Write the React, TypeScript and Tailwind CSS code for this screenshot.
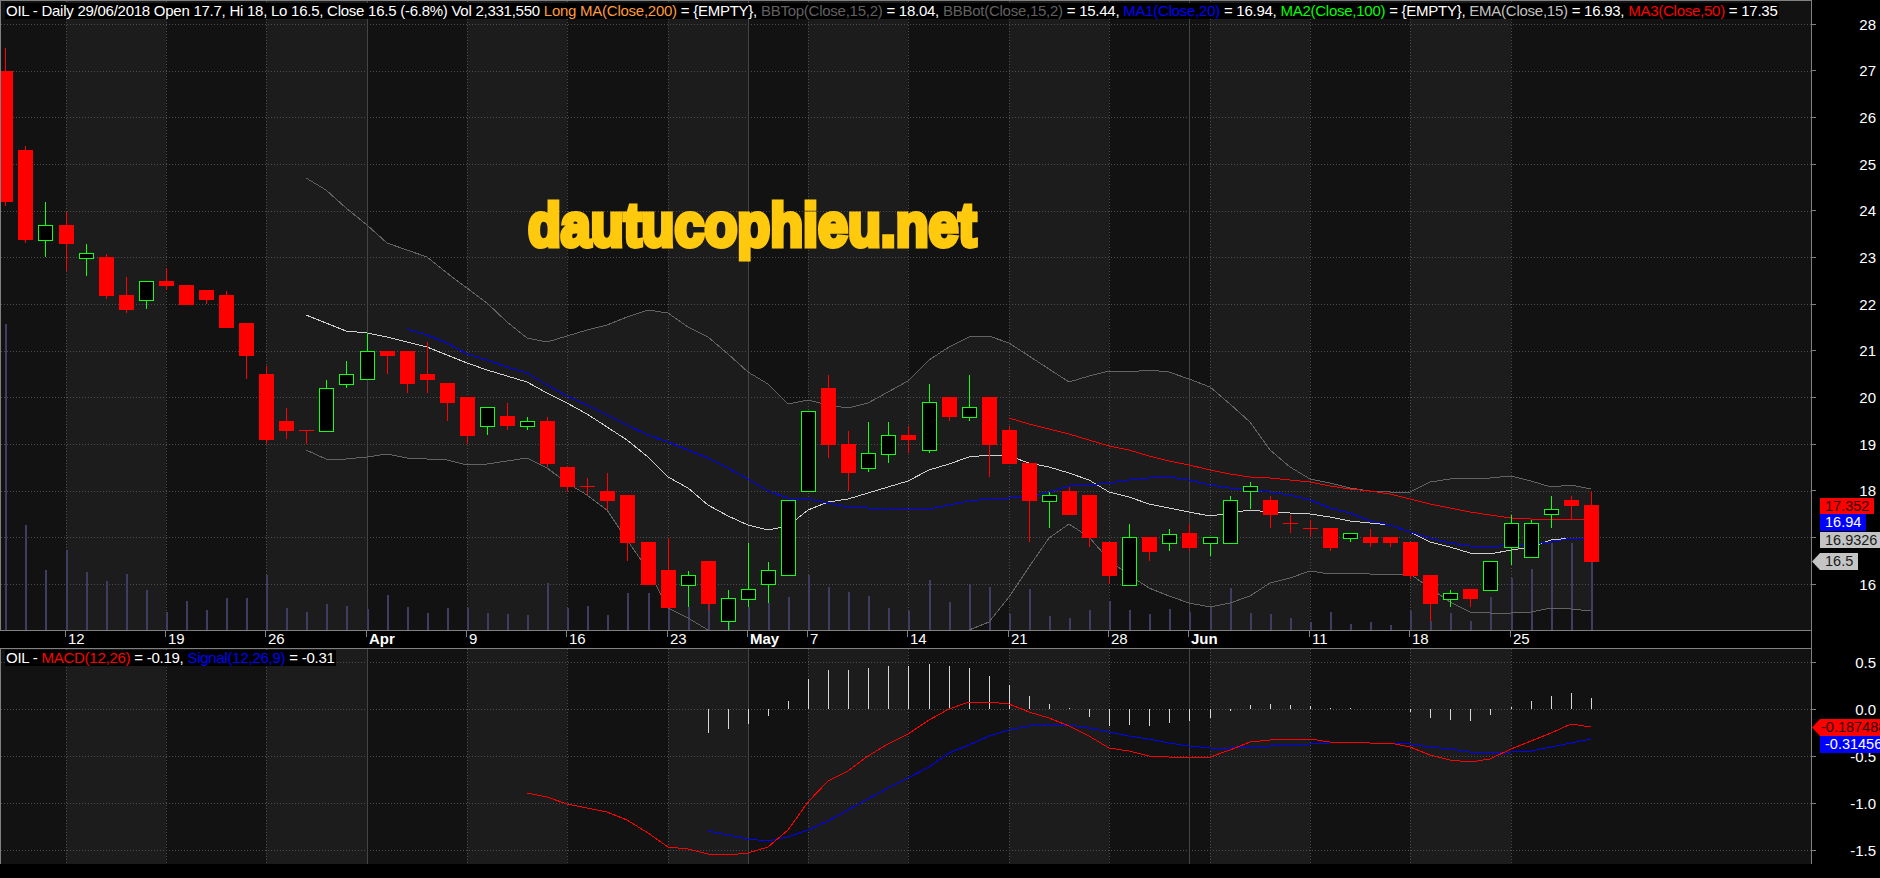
// OIL daily chart (price pane + MACD pane)
const barX = (i: number) => Math.round(5.3 + 20.07 * i);

// wick top, body top, body bottom, wick bottom, up
const candles = [
  [48,71,202,206,0],[146,150,240,243,0],[202,225,240,257,1],[212,225,244,271,0],[244,253,258,276,1],
  [254,257,296,299,0],[277,295,310,313,0],[281,281,300,309,1],[268,281,286,290,0],[285,285,305,305,0],
  [290,290,300,304,0],[291,295,328,328,0],[323,323,356,379,0],[366,374,440,444,0],[408,421,431,439,0],
  [430,430,430,444,0],[380,388,431,431,1],[361,374,384,388,1],[333,351,379,379,1],[351,351,356,374,0],
  [351,351,384,393,0],[342,374,380,393,0],[383,383,403,421,0],[397,397,436,444,0],[407,407,426,435,1],
  [403,416,426,430,0],[417,421,426,430,1],[417,421,464,467,0],[467,467,487,492,0],[478,486,486,495,0],
  [473,491,501,510,0],[495,495,543,561,0],[542,542,585,585,0],[538,570,608,608,0],[571,575,585,607,1],
  [561,561,604,610,0],[590,598,621,630,1],[543,589,599,607,1],[562,570,584,603,1],[500,500,575,575,1],
  [411,411,491,491,1],[375,388,445,458,0],[431,444,473,491,0],[422,453,468,472,1],[422,435,454,463,1],
  [426,435,440,453,0],[384,402,450,453,1],[397,397,417,421,0],[375,407,417,421,1],[397,397,445,477,0],
  [426,430,464,464,0],[463,463,501,542,0],[492,495,501,528,1],[487,491,515,515,0],[495,495,538,547,0],
  [542,542,576,584,0],[524,537,585,585,1],[537,537,552,561,0],[529,534,543,551,1],[524,533,548,551,0],
  [537,537,543,556,1],[496,500,543,543,1],[482,486,491,509,1],[496,500,515,528,0],[515,523,523,533,0],
  [520,528,528,537,0],[528,528,548,551,0],[533,533,538,542,1],[529,537,543,547,0],[537,537,543,547,0],
  [542,542,576,579,0],[575,575,604,621,0],[590,593,599,607,1],[589,589,599,607,0],[561,561,590,590,1],
  [515,523,547,565,1],[520,523,557,557,1],[496,509,514,528,1],[496,500,506,520,0],[491,505,562,562,0],
];

const volumes = [
  324,525,570,550,572,581,574,590,612,601,610,598,598,575,608,612,604,606,609,595,
  607,613,608,608,613,614,615,583,608,606,615,593,593,608,607,604,621,607,603,597,
  575,587,592,596,608,611,580,602,584,587,614,589,616,618,610,601,610,614,609,612,
  607,588,613,614,618,622,612,624,622,625,611,621,613,621,597,578,569,543,543,562,
];

const bbTop = [
  178,190,208,225,243,250,257,273,288,303,322,338,342,336,330,325,317,310,313,327,
  337,354,372,384,404,400,405,408,403,392,381,360,347,337,336,343,356,369,382,376,
  371,372,370,372,379,387,404,422,450,467,479,483,488,491,492,492,482,479,478,478,
  476,481,487,485,489,
];
const bbBot = [
  450,459,459,457,454,458,459,460,465,464,461,458,468,483,495,510,540,570,608,618,
  630,645,650,650,650,650,650,650,650,650,650,650,650,630,622,597,567,538,524,537,
  560,575,588,596,603,607,603,596,583,578,571,574,573,574,574,574,588,602,612,613,
  613,612,608,609,611,
];
const ema = [
  315,323,331,333,337,342,347,355,363,370,376,382,393,403,414,427,440,457,477,488,
  505,516,525,530,526,510,502,499,493,487,481,470,464,457,455,456,463,467,473,480,
  492,497,504,508,512,516,513,510,512,513,514,517,521,523,525,532,542,547,553,554,
  550,547,540,538,539,
];
const ma20 = [
  329,335,343,354,360,367,373,385,396,405,415,425,435,442,450,458,468,479,491,498,
  499,503,507,508,509,509,509,505,501,499,498,497,492,486,485,483,480,478,477,480,
  485,488,489,492,495,500,508,513,521,525,532,538,543,546,547,545,544,542,538,539,
];
const ma50 = [
  418,424,429,434,440,446,450,456,461,465,470,474,477,478,480,482,486,489,491,494,
  499,504,508,512,515,518,519,519,519,520,
];
const macd = [
  793,797,804,808,812,820,833,847,849,854,855,853,847,830,802,781,771,756,744,734,
  720,709,702,702,704,712,718,726,736,748,751,756,757,758,757,750,742,740,739,739,
  742,742,743,743,747,755,760,762,759,749,741,733,724,727,
];
const signal = [
  831,835,839,841,837,830,821,810,799,788,778,767,753,745,736,730,726,725,725,728,
  732,736,739,743,746,748,748,747,746,744,744,743,742,743,743,744,747,749,752,753,
  752,751,747,743,739,
];
const macdHist = [
  733,729,724,716,701,679,670,670,668,666,666,664,666,668,676,685,696,704,708,717,
  726,725,726,723,721,718,711,705,704,705,706,708,708,709,709,712,718,720,721,715,
  707,701,696,693,698,
];

const lightBands = [[3,8],[13,18],[23,28],[33,37],[40,45],[50,55],[60,65],[70,75]];
const dottedX = [3,8,13,23,28,33,40,45,50,55,60,65,70,75];
const solidX = [18,37,59];
const priceY = [24,71,117,164,211,257,304,351,397,444,491,537,584];
const macdY = [662,709,756,803,850];

const timeTicks: [number, string, boolean][] = [
  [3,"12",false],[8,"19",false],[13,"26",false],[18,"Apr",true],[23,"9",false],[28,"16",false],
  [33,"23",false],[37,"May",true],[40,"7",false],[45,"14",false],[50,"21",false],[55,"28",false],
  [59,"Jun",true],[65,"11",false],[70,"18",false],[75,"25",false],
];

const toPoints = (ys: number[], start: number) =>
  ys.map((y, k) => `${barX(start + k)},${y}`).join(" ");

function Backdrop({ top, height }: { top: number; height: number }) {
  return (
    <>
      {lightBands.map(([a, b]) => (
        <rect key={a} x={barX(a)} y={top} width={barX(b) - barX(a)} height={height} fill="#1c1c1c" />
      ))}
    </>
  );
}

function Grid({ ys, top, height }: { ys: number[]; top: number; height: number }) {
  return (
    <g shapeRendering="crispEdges">
      {ys.map((y) => (
        <line key={y} x1={1} x2={1811} y1={y + 0.5} y2={y + 0.5} stroke="#4d4d4d" strokeDasharray="1 2" />
      ))}
      {dottedX.map((i) => (
        <line key={i} x1={barX(i) + 0.5} x2={barX(i) + 0.5} y1={top} y2={top + height} stroke="#4d4d4d" strokeDasharray="1 2" />
      ))}
      {solidX.map((i) => (
        <line key={i} x1={barX(i) + 0.5} x2={barX(i) + 0.5} y1={top} y2={top + height} stroke="#444444" />
      ))}
    </g>
  );
}

function Curve({ ys, start, color }: { ys: number[]; start: number; color: string }) {
  return <polyline points={toPoints(ys, start)} fill="none" stroke={color} strokeWidth={1} shapeRendering="crispEdges" />;
}

function PriceChart() {
  return (
    <svg width={1810} height={629} viewBox="1 1 1810 629" className="block">
      <rect x={1} y={1} width={1810} height={629} fill="#121212" />
      <Backdrop top={1} height={629} />
      <polygon
        points={`${toPoints(bbTop, 15)} ${[...bbBot].map((y, k) => `${barX(15 + k)},${y}`).reverse().join(" ")}`}
        fill="#1c1c1c"
      />
      <Grid ys={priceY} top={1} height={629} />
      <g shapeRendering="crispEdges">
        {volumes.map((top, i) => (
          <rect key={i} x={barX(i)} y={top} width={2} height={630 - top} fill="#3e3e64" />
        ))}
      </g>
      <Curve ys={bbTop} start={15} color="#636363" />
      <Curve ys={bbBot} start={15} color="#636363" />
      <Curve ys={ema} start={15} color="#cfcfcf" />
      <Curve ys={ma20} start={20} color="#0000ff" />
      <Curve ys={ma50} start={50} color="#ff0000" />
      <g shapeRendering="crispEdges">
        {candles.map(([wt, bt, bb, wb, up], i) => {
          const x = barX(i);
          const color = up ? "#14ff14" : "#ff0000";
          return (
            <g key={i}>
              <line x1={x + 0.5} x2={x + 0.5} y1={wt} y2={wb} stroke={color} />
              {up ? (
                <rect x={x - 7 + 0.5} y={bt + 0.5} width={14} height={bb - bt} fill="#000000" stroke={color} />
              ) : (
                <rect x={x - 7} y={bt} width={15} height={Math.max(bb - bt, 1)} fill={color} />
              )}
            </g>
          );
        })}
      </g>
    </svg>
  );
}

function MacdChart() {
  return (
    <svg width={1810} height={215} viewBox="1 649 1810 215" className="block">
      <rect x={1} y={649} width={1810} height={215} fill="#121212" />
      <Backdrop top={649} height={215} />
      <Grid ys={macdY} top={649} height={215} />
      <g shapeRendering="crispEdges">
        {macdHist.map((y, k) => {
          const x = barX(35 + k) + 0.5;
          return <line key={k} x1={x} x2={x} y1={709} y2={y} stroke="#d8d8d8" />;
        })}
      </g>
      <Curve ys={signal} start={35} color="#0000ff" />
      <Curve ys={macd} start={26} color="#ff0000" />
    </svg>
  );
}

function AxisRow({ label, height }: { label: string; height: string }) {
  return (
    <div className={`flex items-center shrink-0 ${height}`}>
      <span className="w-[4px] h-px bg-[#808080]" />
      <span className="ml-auto pr-[4px] text-white">{label}</span>
    </div>
  );
}

function TimeAxis() {
  return (
    <div className="flex h-[19px] border-y border-[#808080] w-[1811px] bg-black text-white">
      <div className="w-[65px]" />
      {timeTicks.map(([i, label, bold], k) => {
        const next = k + 1 < timeTicks.length ? barX(timeTicks[k + 1][0]) : 1811;
        return (
          <div key={label} className="flex" style={{ width: next - barX(i) }}>
            <span className="w-px h-[6px] bg-[#808080]" />
            <span className={`ml-[2px] leading-[16px] ${bold ? "font-bold" : ""}`}>{label}</span>
          </div>
        );
      })}
    </div>
  );
}

export default function App() {
  return (
    <div className="w-[1880px] h-[878px] bg-black overflow-hidden flex flex-col font-['Liberation_Sans',Arial,sans-serif] text-[15px]">
      {/* Price pane */}
      <div className="flex h-[630px]">
        <div className="relative w-[1811px] border-t border-l border-[#808080]">
          <PriceChart />
          <div className="absolute left-[4px] top-[2px] h-[16px] bg-black px-[1px] leading-[15px] text-white tracking-[-0.255px] whitespace-nowrap">
            OIL - Daily 29/06/2018 Open 17.7, Hi 18, Lo 16.5, Close 16.5 (-6.8%) Vol 2,331,550{" "}
            <span className="text-[#ff9a3c]">Long MA(Close,200)</span> = {"{EMPTY}"},{" "}
            <span className="text-[#606060]">BBTop(Close,15,2)</span> = 18.04,{" "}
            <span className="text-[#606060]">BBBot(Close,15,2)</span> = 15.44,{" "}
            <span className="text-[#0000ff]">MA1(Close,20)</span> = 16.94,{" "}
            <span className="text-[#00ff00]">MA2(Close,100)</span> = {"{EMPTY}"},{" "}
            <span className="text-[#c0c0c0]">EMA(Close,15)</span> = 16.93,{" "}
            <span className="text-[#ff0000]">MA3(Close,50)</span> = 17.35
          </div>
          <div className="absolute left-[527px] top-[193px] origin-left scale-x-[0.868] text-[62px] leading-none font-bold text-[#ffc90e] whitespace-nowrap [-webkit-text-stroke:5px_#ffc90e]">
            dautucophieu.net
          </div>
        </div>
        <div className="relative flex-1 flex flex-col pt-[1px] border-l border-[#808080] leading-none">
          {["28","27","26","25","24","23","22","21","20","19","18","17","16"].map((p) => (
            <AxisRow key={p} label={p} height="h-[46.67px]" />
          ))}
          <div className="absolute left-[8px] top-[498px] w-[54px] h-[16px] bg-[#ff0000] pl-[5px] leading-[16px] text-[14.5px] text-[#2a0000]">17.352</div>
          <div className="absolute left-[8px] top-[514px] w-[46px] h-[17px] bg-[#0000ff] pl-[5px] leading-[17px] text-[14.5px] text-white">16.94</div>
          <div className="absolute left-[8px] top-[532px] w-[60px] h-[16px] bg-[#c4c4c4] pl-[5px] leading-[16px] text-[14.5px] text-[#1a1a1a]">16.9326</div>
          <div className="absolute left-0 top-[553px] w-[46px] h-[17px] bg-[#c4c4c4] pl-[13px] leading-[17px] text-[14.5px] text-[#1a1a1a] [clip-path:polygon(8px_0,100%_0,100%_100%,8px_100%,0_50%)]">16.5</div>
        </div>
      </div>

      <div className="flex">
        <TimeAxis />
        <div className="flex-1 border-l border-[#808080]" />
      </div>

      {/* MACD pane */}
      <div className="flex h-[215px]">
        <div className="relative w-[1811px] border-l border-[#808080]">
          <MacdChart />
          <div className="absolute left-[4px] top-[1px] h-[16px] bg-black px-[1px] leading-[15px] text-white tracking-[-0.255px] whitespace-nowrap">
            OIL - <span className="text-[#ff0000]">MACD(12,26)</span> = -0.19,{" "}
            <span className="text-[#0000ff]">Signal(12,26,9)</span> = -0.31
          </div>
        </div>
        <div className="relative flex-1 border-l border-[#808080] leading-none overflow-hidden">
          <div className="-mt-[10px]">
            {["0.5","0.0","-0.5","-1.0","-1.5"].map((p) => (
              <AxisRow key={p} label={p} height="h-[47px]" />
            ))}
          </div>
          <div className="absolute left-0 top-[70px] w-[68px] h-[17px] bg-[#ff0000] pl-[9px] leading-[17px] text-[14.5px] text-[#2a0000] whitespace-nowrap [clip-path:polygon(8px_0,100%_0,100%_100%,8px_100%,0_50%)]">-0.187488</div>
          <div className="absolute left-[8px] top-[87px] w-[60px] h-[17px] bg-[#0000ff] pl-[5px] leading-[17px] text-[14.5px] text-white whitespace-nowrap overflow-hidden">-0.314568</div>
        </div>
      </div>
    </div>
  );
}
